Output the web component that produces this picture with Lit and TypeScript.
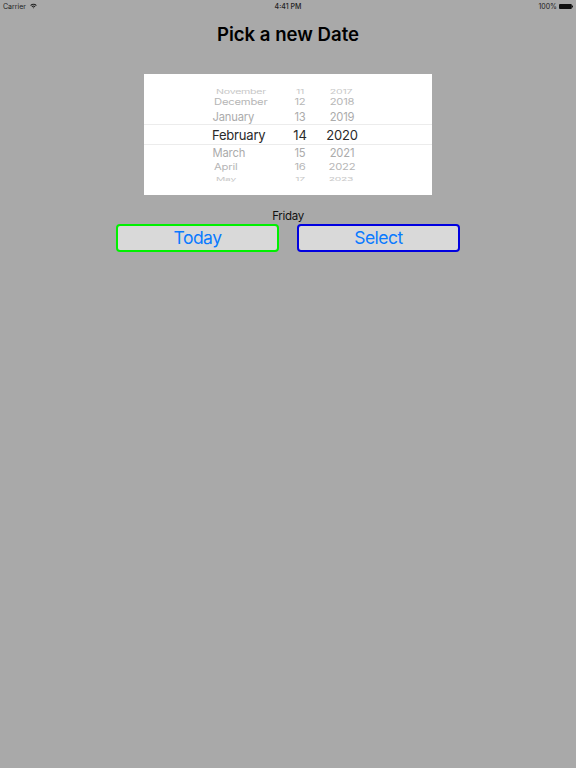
import { LitElement, html, css } from "lit";
import { customElement } from "lit/decorators.js";

interface Row { m: string; d: string; y: string; h: number; sy: number; sx: number; size: number; color: string; mi: number; yo: number; dy: number; }

const ROWS: Row[] = [
  { m: "October", d: "10", y: "2016", h: 2, sy: 0.3, sx: 1.1, size: 8.5, color: "#dddddd", mi: 6, yo: -2, dy: 0 },
  { m: "November", d: "11", y: "2017", h: 9, sy: 0.6, sx: 1.15, size: 9.2, color: "#c8c8c8", mi: 4, yo: -1, dy: 0 },
  { m: "December", d: "12", y: "2018", h: 13, sy: 0.82, sx: 1.04, size: 10.8, color: "#b6b6b6", mi: 2, yo: 0, dy: 0 },
  { m: "January", d: "13", y: "2019", h: 15, sy: 1, sx: 0.92, size: 12.2, color: "#ababab", mi: 0.5, yo: 0, dy: 1 },
  { m: "February", d: "14", y: "2020", h: 21, sy: 1.04, sx: 1, size: 13, color: "#2a2a2a", mi: 0, yo: 0, dy: 0.5 },
  { m: "March", d: "15", y: "2021", h: 15, sy: 1, sx: 0.92, size: 12.2, color: "#ababab", mi: 0.5, yo: 0, dy: 0.5 },
  { m: "April", d: "16", y: "2022", h: 14, sy: 0.82, sx: 1.04, size: 10.8, color: "#b6b6b6", mi: 2, yo: 0, dy: 0.5 },
  { m: "May", d: "17", y: "2023", h: 9, sy: 0.55, sx: 1.12, size: 9.2, color: "#c8c8c8", mi: 4, yo: -1, dy: 1 },
  { m: "June", d: "18", y: "2024", h: 2, sy: 0.3, sx: 1.1, size: 8.5, color: "#dddddd", mi: 6, yo: -2, dy: 0 },
];

@customElement("app-root")
export class AppRoot extends LitElement {
  static styles = css`
    :host { display: block; width: 576px; height: 768px; background: #a9a9a9; overflow: hidden; font-family: Inter, "Liberation Sans", sans-serif; color: #000; }
    .status { height: 12px; display: grid; grid-template-columns: 1fr auto 1fr; align-items: center; padding: 0 3px; font-size: 7px; color: #222; }
    .left { display: flex; align-items: center; gap: 4px; }
    .right { display: flex; align-items: center; justify-content: flex-end; gap: 2px; }
    .clock { font-weight: 500; }
    h1 { margin: 0; height: 44px; display: flex; align-items: center; justify-content: center; font-size: 18.6px; font-weight: 600; }
    .picker { box-sizing: border-box; width: 288px; height: 121px; margin: 18px auto 0; background: #fff; padding-top: 11px; }
    .wheel { height: 100px; overflow: hidden; display: flex; flex-direction: column; }
    .row { display: grid; grid-template-columns: 68px 80px 16px 68px; flex: none; align-items: center; white-space: nowrap; letter-spacing: -0.2px; overflow: hidden; }
    .row > span { display: block; line-height: 1; text-align: center; }
    .row .mon { grid-column: 2; text-align: left; transform-origin: left center; }
    .row .day { grid-column: 3; }
    .row .yr { grid-column: 4; }
    .sel { border-top: 1px solid #ececec; border-bottom: 1px solid #ececec; box-sizing: border-box; }
    .day-name { margin-top: 15px; height: 13px; line-height: 13px; font-size: 11.5px; letter-spacing: -0.3px; text-align: center; color: #111; }
    .actions { display: flex; gap: 18px; margin-top: 1px; padding-left: 116px; }
    button { box-sizing: border-box; width: 163px; height: 28px; margin: 0; padding: 0 0 1px; border-radius: 4px; border: 2px solid; background: #d9d9d9; color: #0a7aff; font: 400 17.5px Inter, "Liberation Sans", sans-serif; letter-spacing: -0.5px; }
    .today { border-color: #00f000; }
    .select { border-color: #0000e0; }
    svg { display: block; }
  `;

  render() {
    return html`
      <div class="status">
        <div class="left">
          <span>Carrier</span>
          <svg width="7" height="6" viewBox="0 0 9 7" aria-hidden="true">
            <path d="M0.3 2.4 A5.6 5.6 0 0 1 8.7 2.4 L7.7 3.4 A4.2 4.2 0 0 0 1.3 3.4 Z M2 4.1 A3.2 3.2 0 0 1 7 4.1 L6 5.1 A1.9 1.9 0 0 0 3 5.1 Z M3.6 5.7 A1.2 1.2 0 0 1 5.4 5.7 L4.5 6.7 Z" fill="#222"/>
          </svg>
        </div>
        <div class="clock">4:41 PM</div>
        <div class="right">
          <span>100%</span>
          <svg width="14" height="5" viewBox="0 0 14 5" aria-hidden="true">
            <rect x="0" y="0" width="12.8" height="5" rx="1" fill="#111"/>
            <rect x="13" y="1.6" width="1" height="1.8" fill="#111"/>
          </svg>
        </div>
      </div>
      <h1>Pick a new Date</h1>
      <div class="picker">
        <div class="wheel">
          ${ROWS.map((r) => {
            const t = `translateY(${r.dy}px) scale(${r.sx}, ${r.sy})`;
            return html`
              <div class="row ${r.m === "February" ? "sel" : ""}" style="height:${r.h}px;color:${r.color};font-size:${r.size}px">
                <span class="mon" style="transform:translateX(${r.mi}px) ${t}">${r.m}</span>
                <span class="day" style="transform:${t}">${r.d}</span>
                <span class="yr" style="transform:translateX(${r.yo}px) ${t}">${r.y}</span>
              </div>
            `;
          })}
        </div>
      </div>
      <div class="day-name">Friday</div>
      <div class="actions">
        <button class="today">Today</button>
        <button class="select">Select</button>
      </div>
    `;
  }
}
